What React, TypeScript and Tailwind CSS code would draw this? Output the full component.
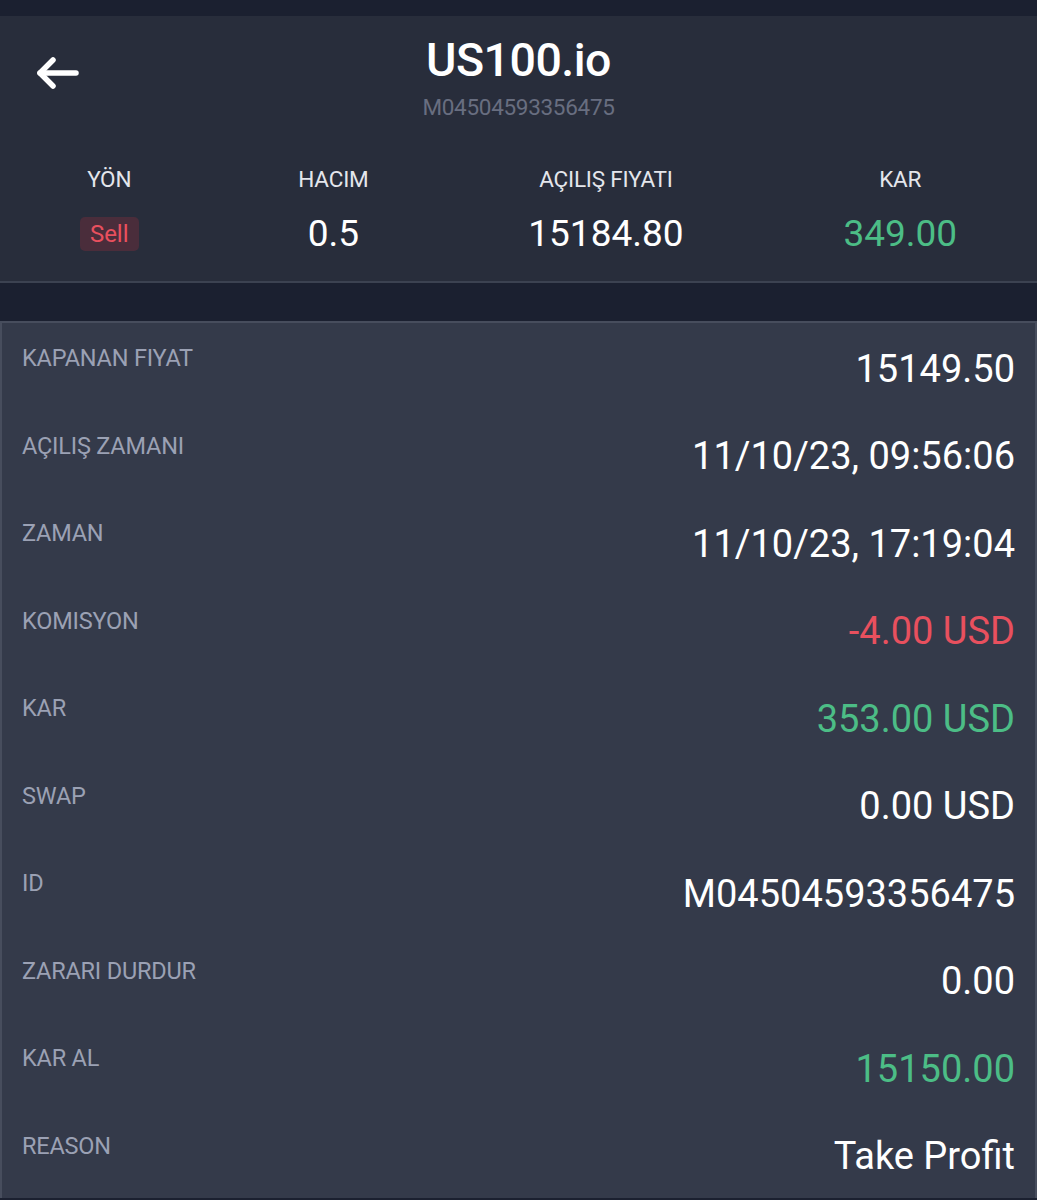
const font = { fontFamily: "Roboto, 'Noto Sans', sans-serif" };

type Row = { label: string; value: string; tone?: "red" | "green" };

const rows: Row[] = [
  { label: "KAPANAN FIYAT", value: "15149.50" },
  { label: "AÇILIŞ ZAMANI", value: "11/10/23, 09:56:06" },
  { label: "ZAMAN", value: "11/10/23, 17:19:04" },
  { label: "KOMISYON", value: "-4.00 USD", tone: "red" },
  { label: "KAR", value: "353.00 USD", tone: "green" },
  { label: "SWAP", value: "0.00 USD" },
  { label: "ID", value: "M04504593356475" },
  { label: "ZARARI DURDUR", value: "0.00" },
  { label: "KAR AL", value: "15150.00", tone: "green" },
  { label: "REASON", value: "Take Profit" },
];

function BackArrow() {
  return (
    <svg width="44" height="36" viewBox="0 0 44 36" fill="none" className="block">
      <path d="M4 17H40" stroke="white" strokeWidth="5.5" strokeLinecap="round" />
      <path d="M17 4L4 17L17 30" stroke="white" strokeWidth="5.5" strokeLinecap="round" strokeLinejoin="round" />
    </svg>
  );
}

function Stat({ label, children }: { label: string; children: React.ReactNode }) {
  return (
    <div className="flex flex-col items-center">
      <div className="text-[22.5px] leading-none text-[#e4e6ec] tracking-[-0.2px]">{label}</div>
      <div className="mt-[25px] h-[36px] flex items-center">{children}</div>
    </div>
  );
}

export default function App() {
  return (
    <div className="w-[1037px] h-[1200px] bg-[#1b2030] flex flex-col" style={font}>
      <div className="h-[16px] bg-[#1b2030]" />
      <div className="h-[267px] bg-[#282d3b] border-b-2 border-[#3c4251] flex flex-col">
        <div className="relative flex flex-col items-center pt-[20px]">
          <div className="absolute left-[36px] top-[40px]">
            <BackArrow />
          </div>
          <div className="text-[46.5px] leading-[48px] text-white font-medium tracking-[-0.5px]">US100.io</div>
          <div className="mt-[10px] text-[22.5px] leading-[26px] text-[#686e80] tracking-[-0.3px]">M04504593356475</div>
        </div>
        <div className="mt-[48px] flex justify-around">
          <Stat label="YÖN">
            <span className="rounded-[5px] bg-[#4a2d3b] px-[10px] h-[34px] flex items-center text-[24px] text-[#e8505e]">Sell</span>
          </Stat>
          <Stat label="HACIM">
            <span className="text-[37px] text-white">0.5</span>
          </Stat>
          <Stat label="AÇILIŞ FIYATI">
            <span className="text-[37px] text-white">15184.80</span>
          </Stat>
          <Stat label="KAR">
            <span className="text-[37px] text-[#4cbd86]">349.00</span>
          </Stat>
        </div>
      </div>
      <div className="h-[38px] bg-[#1b2030]" />
      <div className="h-[877px] bg-[#343a4a] border-t-2 border-l-2 border-r-2 border-[#474d5d] flex flex-col">
        {rows.map((r) => (
          <div key={r.label} className="h-[87.5px] flex items-center justify-between pl-[20px] pr-[20px]">
            <span className="pb-[16px] text-[23.5px] leading-none text-[#9ba1b4] tracking-[-0.2px]">{r.label}</span>
            <span
              className={
                "pt-[4px] text-[38px] leading-none " +
                (r.tone === "red" ? "text-[#e8505e]" : r.tone === "green" ? "text-[#4cbd86]" : "text-white")
              }
            >
              {r.value}
            </span>
          </div>
        ))}
      </div>
    </div>
  );
}
